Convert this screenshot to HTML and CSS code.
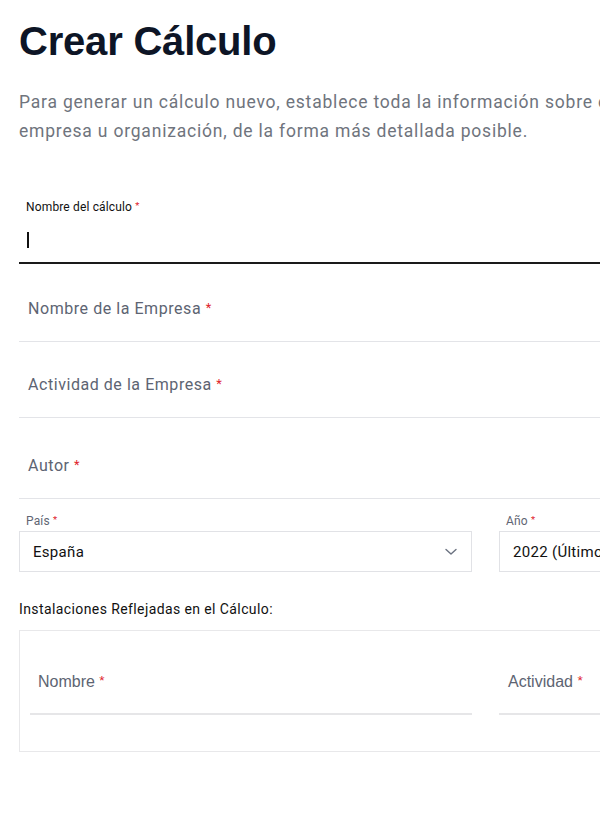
FILE: index.html
```html
<!DOCTYPE html>
<html lang="es">
<head>
<meta charset="utf-8">
<title>Crear Cálculo</title>
<link rel="stylesheet" href="styles.css">
</head>
<body>
<main class="page">
  <h1 class="title">Crear Cálculo</h1>
  <p class="intro">Para generar un cálculo nuevo, establece toda la información sobre el cálculo de tu empresa u organización, de la forma más detallada posible.</p>

  <div class="field field-active">
    <div class="small-label dark">Nombre del cálculo <span class="req">*</span></div>
    <div class="input-line"><span class="caret"></span></div>
  </div>

  <div class="field field-plain field-first">
    <div class="ph">Nombre de la Empresa <span class="req">*</span></div>
  </div>
  <div class="field field-plain">
    <div class="ph">Actividad de la Empresa <span class="req">*</span></div>
  </div>
  <div class="field field-plain field-tall">
    <div class="ph">Autor <span class="req">*</span></div>
  </div>

  <div class="two-col selects">
    <div class="select-group">
      <div class="small-label">País <span class="req">*</span></div>
      <div class="select">
        <span class="select-value">España</span>
        <svg class="chev" width="12" height="8" viewBox="0 0 12 8"><path d="M1 1.5 L6 6 L11 1.5" fill="none" stroke="#6b7280" stroke-width="1.4" stroke-linecap="round" stroke-linejoin="round"/></svg>
      </div>
    </div>
    <div class="select-group">
      <div class="small-label">Año <span class="req">*</span></div>
      <div class="select">
        <span class="select-value">2022 (Último año disponible)</span>
        <svg class="chev" width="12" height="8" viewBox="0 0 12 8"><path d="M1 1.5 L6 6 L11 1.5" fill="none" stroke="#6b7280" stroke-width="1.4" stroke-linecap="round" stroke-linejoin="round"/></svg>
      </div>
    </div>
  </div>

  <div class="section-label">Instalaciones Reflejadas en el Cálculo:</div>
  <div class="install-box">
    <div class="two-col inner">
      <div class="inst-field"><span class="inst-ph">Nombre <span class="req">*</span></span></div>
      <div class="inst-field"><span class="inst-ph">Actividad <span class="req">*</span></span></div>
    </div>
  </div>
</main>
</body>
</html>
```
FILE: styles.css
```css
html, body {
  margin: 0;
  padding: 0;
  background: #ffffff;
  overflow: hidden;
}
body {
  font-family: Roboto, "Liberation Sans", sans-serif;
  color: #111827;
}
.page {
  width: 933px;
  padding-left: 19px;
}
.title {
  margin: 17px 0 0 0;
  font-family: "Liberation Sans", Arial, sans-serif;
  font-weight: 700;
  font-size: 40px;
  line-height: 48px;
  color: #0d1526;
  letter-spacing: -0.2px;
}
.intro {
  margin: 23px 0 0 0;
  font-size: 17.5px;
  line-height: 29px;
  color: #6f747d;
  letter-spacing: 0.8px;
  width: 740px;
}
.req {
  color: #e0242b;
  font-size: 0.8em;
  vertical-align: 2px;
}
.small-label {
  font-size: 12px;
  line-height: 14px;
  color: #5f6673;
  padding-left: 7px;
  letter-spacing: 0.15px;
}
.small-label.dark {
  color: #111111;
}
.field-active {
  margin-top: 53px;
}
.input-line {
  height: 48px;
  border-bottom: 2px solid #1a1a1a;
  display: flex;
  align-items: center;
  padding-left: 8px;
}
.caret {
  display: inline-block;
  width: 2px;
  height: 16px;
  background: #111;
  margin-top: 4px;
}
.field-plain {
  height: 75px;
  border-bottom: 1px solid #e3e4e8;
  display: flex;
  align-items: flex-end;
  padding-left: 9px;
}
.field-first {
  height: 77px;
}
.field-tall {
  height: 80px;
}
.ph {
  font-size: 16px;
  line-height: 20px;
  color: #5d6472;
  padding-bottom: 22px;
  letter-spacing: 0.55px;
}
.two-col {
  display: grid;
  grid-template-columns: 1fr 1fr;
  column-gap: 27px;
}
.selects {
  margin-top: 14px;
}
.select-group .small-label {
  margin-bottom: 3px;
}
.select {
  height: 39px;
  border: 1px solid #e1e2e6;
  display: flex;
  align-items: center;
  justify-content: space-between;
  padding: 0 14px 0 13px;
}
.select-value {
  font-size: 15px;
  color: #111111;
  letter-spacing: 0.3px;
}
.section-label {
  margin-top: 29px;
  font-size: 14px;
  line-height: 16px;
  color: #111111;
  letter-spacing: 0.4px;
}
.install-box {
  margin-top: 13px;
  border: 1px solid #e8e8ea;
  height: 122px;
  box-sizing: border-box;
  padding: 0 10px;
}
.inner {
  margin-top: 40px;
}
.inst-field {
  height: 42px;
  border-bottom: 2px solid #e6e6e8;
  padding-left: 8px;
}
.inst-field:last-child {
  padding-left: 9px;
}
.inst-ph {
  font-family: "Liberation Sans", Arial, sans-serif;
  font-size: 16px;
  line-height: 20px;
  color: #5d6472;
}
.inst-ph .req {
  font-size: 0.85em;
}
```
